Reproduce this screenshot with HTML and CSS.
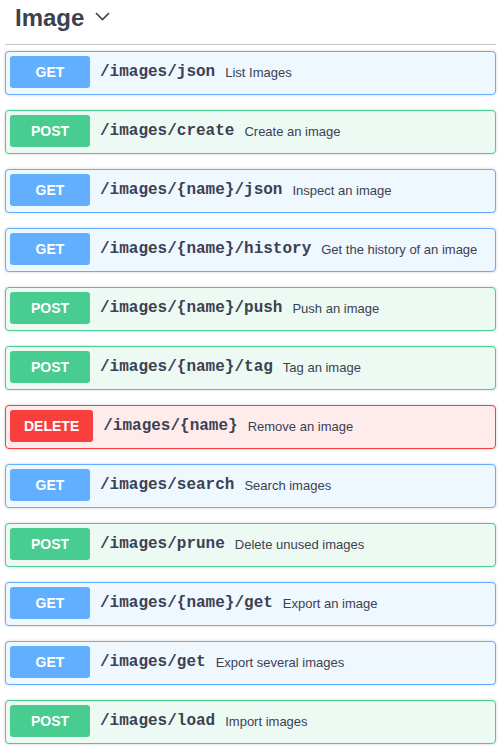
FILE: index.html
```html
<!DOCTYPE html>
<html>
<head>
<meta charset="utf-8">
<link rel="stylesheet" href="styles.css">
</head>
<body>
<div class="wrap">
  <h3 class="tag"><span>Image</span><svg class="arrow" width="15" height="9" viewBox="0 0 15 9"><path d="M1 1 L7.5 7.5 L14 1" fill="none" stroke="#3b4151" stroke-width="1.6"/></svg></h3>
  <div class="op get"><span class="m">GET</span><span class="p">/images/json</span><span class="d">List Images</span></div>
  <div class="op post"><span class="m">POST</span><span class="p">/images/create</span><span class="d">Create an image</span></div>
  <div class="op get"><span class="m">GET</span><span class="p">/images/{name}/json</span><span class="d">Inspect an image</span></div>
  <div class="op get"><span class="m">GET</span><span class="p">/images/{name}/history</span><span class="d">Get the history of an image</span></div>
  <div class="op post"><span class="m">POST</span><span class="p">/images/{name}/push</span><span class="d">Push an image</span></div>
  <div class="op post"><span class="m">POST</span><span class="p">/images/{name}/tag</span><span class="d">Tag an image</span></div>
  <div class="op delete"><span class="m">DELETE</span><span class="p">/images/{name}</span><span class="d">Remove an image</span></div>
  <div class="op get"><span class="m">GET</span><span class="p">/images/search</span><span class="d">Search images</span></div>
  <div class="op post"><span class="m">POST</span><span class="p">/images/prune</span><span class="d">Delete unused images</span></div>
  <div class="op get"><span class="m">GET</span><span class="p">/images/{name}/get</span><span class="d">Export an image</span></div>
  <div class="op get"><span class="m">GET</span><span class="p">/images/get</span><span class="d">Export several images</span></div>
  <div class="op post"><span class="m">POST</span><span class="p">/images/load</span><span class="d">Import images</span></div>
</div>
</body>
</html>
```
FILE: styles.css
```css
html, body { margin: 0; padding: 0; background: #fff; }
body { font-family: "Liberation Sans", Arial, sans-serif; color: #3b4151; }
.wrap { padding-left: 5px; width: 491px; }
.tag {
  margin: 0 0 6px 0;
  padding: 3px 0 11px 10px;
  font-size: 24px;
  line-height: 30px;
  font-weight: bold;
  border-bottom: 1px solid #c4c6cb;
  display: flex;
  align-items: flex-start;
}
.arrow { margin: 9px 0 0 11px; }
.op {
  display: flex;
  align-items: center;
  border: 1px solid;
  border-radius: 4px;
  padding: 4px 4px 6px 4px;
  margin-bottom: 15px;
  box-shadow: 0 0 3px rgba(0,0,0,.19);
}
.m {
  min-width: 80px;
  height: 32px;
  line-height: 32px;
  text-align: center;
  border-radius: 3px;
  color: #fff;
  font-size: 14px;
  font-weight: bold;
  box-sizing: border-box;
}
.p {
  font-family: "Liberation Mono", "Courier New", monospace;
  font-weight: bold;
  font-size: 16px;
  padding: 0 10px;
  color: #3b4151;
}
.d { font-size: 13px; color: #3b4151; }
.get { background: #eff7ff; border-color: #61affe; }
.get .m { background: #61affe; }
.post { background: #edfaf4; border-color: #49cc90; }
.post .m { background: #49cc90; }
.delete { background: #feecec; border-color: #f93e3e; }
.delete .m { background: #f93e3e; padding: 0 14px; }
```
